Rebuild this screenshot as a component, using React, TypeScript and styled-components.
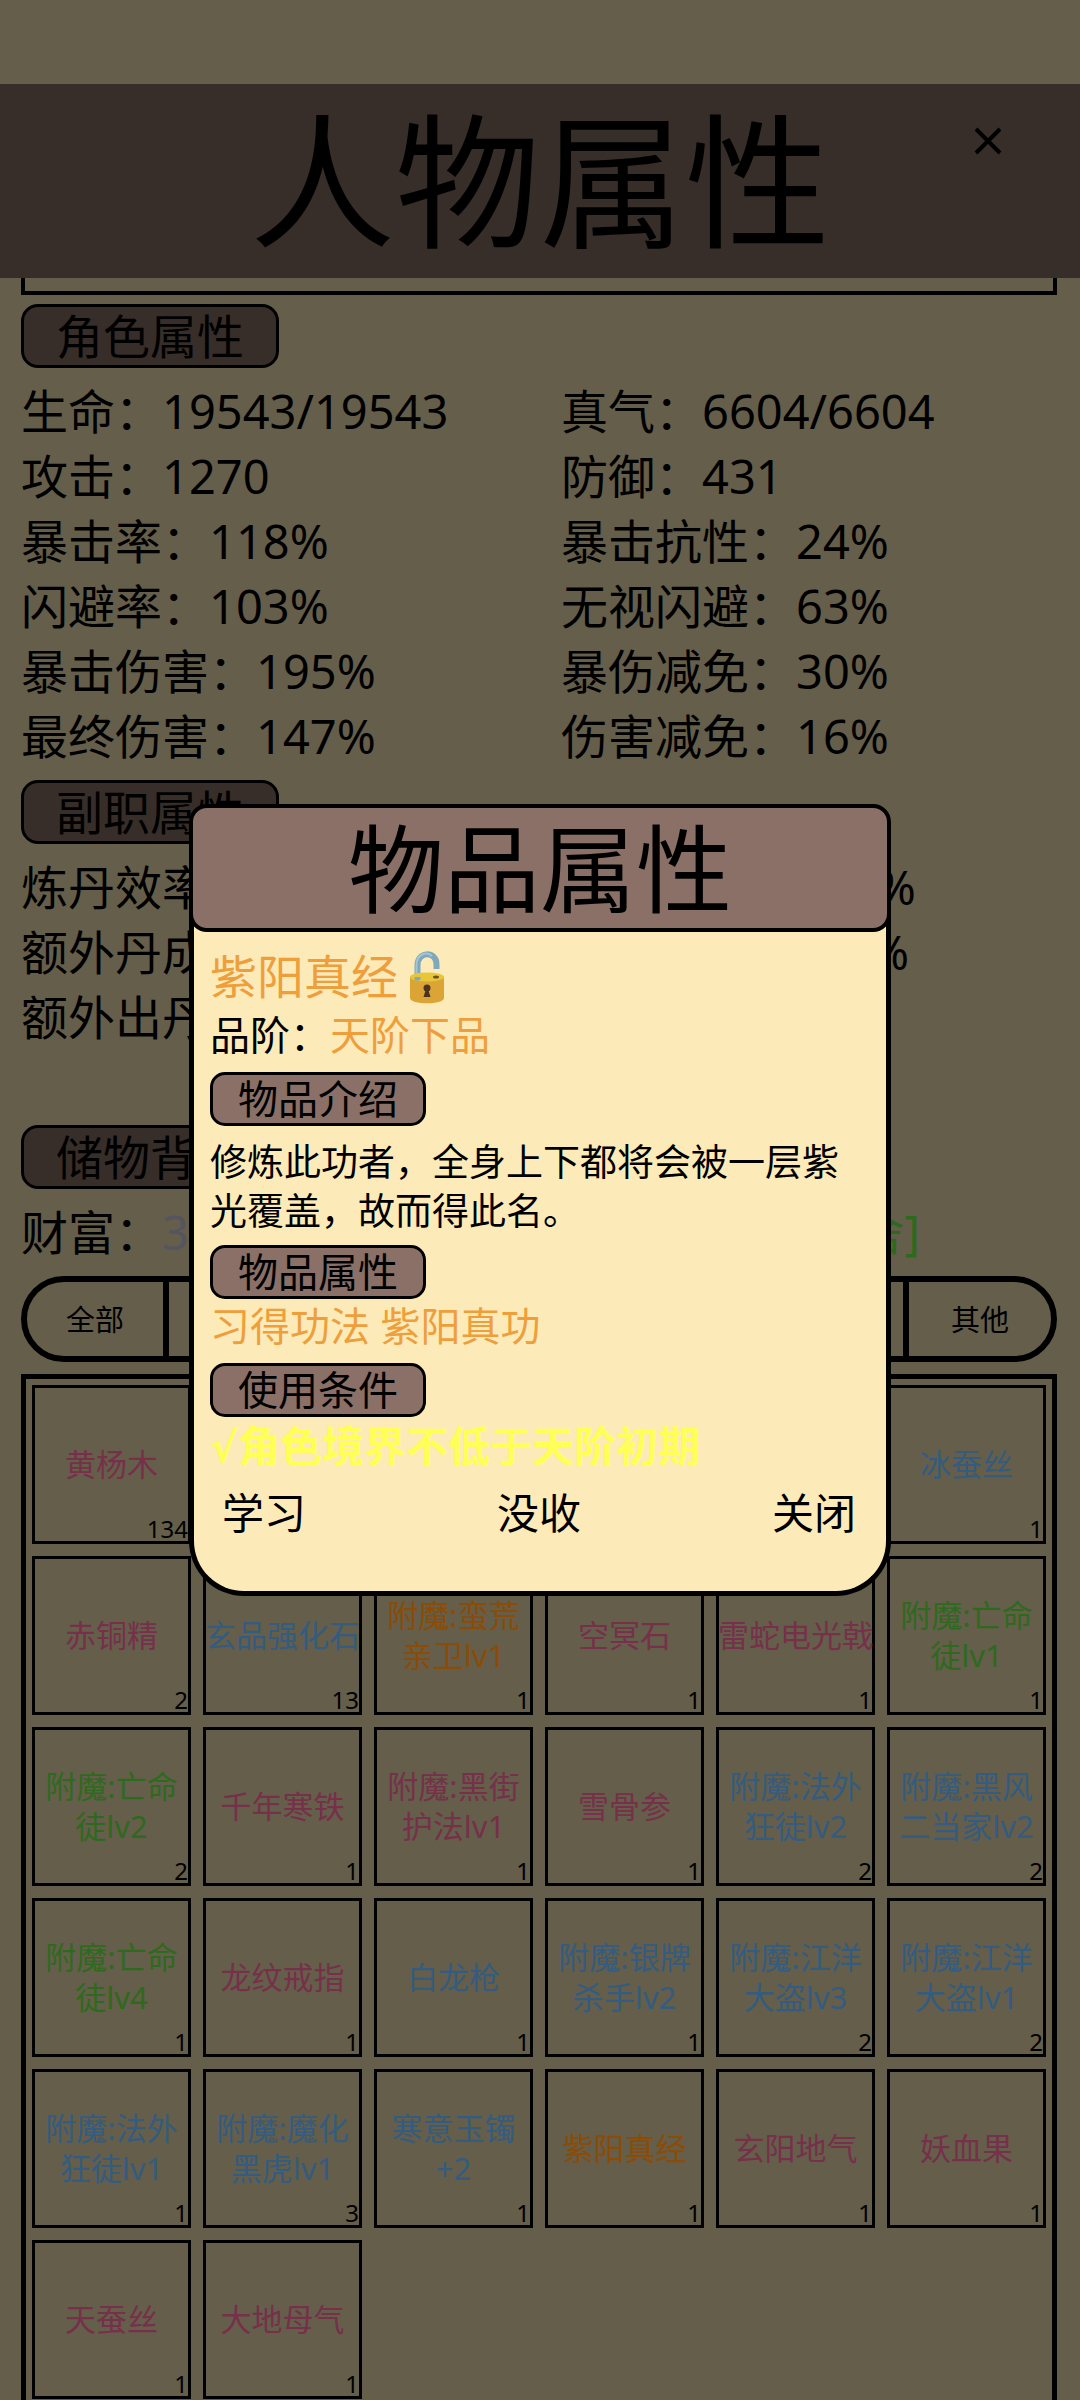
import React from "react";
import styled, { createGlobalStyle } from "styled-components";

const quality = {
  pink: "#76304a",
  blue: "#335c80",
  green: "#2e6a1e",
  orange: "#8a4c06",
};
type Quality = keyof typeof quality;

const dimmedPage = "#655e4a";
const dimmedBar = "#372d29";
const paper = "#fcebb9";
const bar = "#8a7066";
const gold = "#ee9f3c";

const GlobalStyle = createGlobalStyle`
  * { box-sizing: border-box; }
  body {
    margin: 0;
    background: ${dimmedPage};
    color: #000;
    font-family: "Noto Sans", "Noto Sans CJK SC", sans-serif;
    font-weight: 400;
  }
  h1, h2, h3, p, dl, dd, dt, ul { margin: 0; padding: 0; font-weight: 400; }
  ul { list-style: none; }
  button { font: inherit; color: inherit; background: none; border: 0; padding: 0; margin: 0; cursor: pointer; }
`;

const Screen = styled.div`
  display: flex;
  flex-direction: column;
  height: 100vh;
  overflow: hidden;
  padding-top: 84px;
`;

const TitleBar = styled.header`
  flex: none;
  display: grid;
  grid-template-columns: 184px 1fr 184px;
  height: 194px;
  background: ${dimmedBar};
`;

const PageTitle = styled.h1`
  grid-column: 2;
  text-align: center;
  white-space: nowrap;
  font-size: 145px;
  line-height: 194px;
`;

const CloseButton = styled.button`
  align-self: start;
  justify-self: center;
  width: 64px;
  height: 113px;
  display: grid;
  place-items: center;
`;

const Content = styled.main`
  flex: 1;
  min-height: 0;
  overflow: hidden;
`;

const PanelEnd = styled.div`
  height: 17px;
  margin: 0 23px 9px 21px;
  border: 4px solid #000;
  border-top: 0;
`;

const Tag = styled.h2`
  width: fit-content;
  margin-left: 21px;
  padding: 0 32px;
  border: 3px solid #000;
  border-radius: 17px;
  background: ${dimmedBar};
  font-size: 47px;
  line-height: 58px;
`;

const DialogTag = styled.h3`
  width: fit-content;
  padding: 0 25px;
  border: 3px solid #000;
  border-radius: 15px;
  background: ${bar};
  font-size: 40px;
  line-height: 48px;
`;

const Stats = styled.dl`
  display: grid;
  grid-template-columns: 1fr 1fr;
  padding: 11px 0;
  font-size: 47px;
  line-height: 65px;
`;

const Stat = styled.div`
  display: flex;
  padding-left: 21px;
  white-space: nowrap;
`;

const Section = styled.section<{ $gap?: number }>`
  padding-bottom: ${(p) => p.$gap || 0}px;
`;

const Wealth = styled.div`
  display: flex;
  justify-content: space-between;
  padding: 11px 160px 11px 21px;
  font-size: 47px;
  line-height: 65px;
`;

const Money = styled.span`
  color: #54555e;
`;

const Discard = styled.button`
  color: ${quality.green};
`;

const Tabs = styled.nav`
  display: grid;
  grid-template-columns: 142px repeat(5, minmax(0, 1fr)) 142px;
  height: 86px;
  margin: 0 23px 12px 21px;
  border: 6px solid #000;
  border-radius: 43px;
`;

const Tab = styled.button`
  padding-bottom: 3px;
  font-size: 29px;
  &:not(:last-child) { border-right: 6px solid #000; }
`;

const Bag = styled.ul`
  display: grid;
  grid-template-columns: repeat(6, minmax(0, 1fr));
  gap: 12px;
  margin: 0 23px 0 21px;
  padding: 6px;
  border: 5px solid #000;
`;

const Slot = styled.li`
  position: relative;
  aspect-ratio: 1;
  border: 3px solid #000;
`;

const ItemButton = styled.button<{ $quality: Quality }>`
  width: 100%;
  height: 100%;
  display: flex;
  align-items: center;
  justify-content: center;
  padding-bottom: 2px;
  text-align: center;
  white-space: pre;
  color: ${(p) => quality[p.$quality]};
  font-size: 31px;
  line-height: 40px;
`;

const Count = styled.span`
  position: absolute;
  right: 0;
  bottom: 0;
  font-size: 24px;
  line-height: 24px;
`;

const DialogLayer = styled.div`
  position: fixed;
  inset: 0;
  display: grid;
  place-items: center;
`;

const Dialog = styled.section`
  width: 65%;
`;

const DialogTitle = styled.h2`
  position: relative;
  border: 4px solid #000;
  border-radius: 18px;
  background: ${bar};
  text-align: center;
  font-size: 96px;
  line-height: 120px;
`;

const DialogBody = styled.div`
  margin-top: -20px;
  padding: 34px 16px 48px;
  border: 5px solid #000;
  border-top: 0;
  border-radius: 0 0 55px 55px;
  background: ${paper};
`;

const ItemName = styled.h3`
  display: flex;
  align-items: center;
  color: ${gold};
  font-size: 47px;
  line-height: 60px;
`;

const Line = styled.p`
  font-size: 40px;
  line-height: 54px;
  em { font-style: normal; color: ${gold}; }
`;

const Rank = styled(Line)`
  padding: 2px 0 10px;
`;

const Intro = styled.p`
  padding: 11px 0 10px;
  font-size: 37px;
  line-height: 49px;
`;

const Effect = styled(Line)`
  padding-bottom: 10px;
`;

const Requirement = styled.p`
  color: #ffff55;
  font-size: 42px;
  font-weight: 700;
  line-height: 58px;
`;

const Check = styled.span`
  font-family: "DejaVu Sans", sans-serif;
`;

const Actions = styled.div`
  display: flex;
  justify-content: space-between;
  padding: 6px 14px 0 12px;
  font-size: 42px;
  line-height: 60px;
`;

const Lock = styled.svg`
  width: 56px;
  height: 56px;
`;

function OpenLock() {
  return (
    <Lock viewBox="0 0 56 56" aria-hidden="true">
      <path d="M19.500 32V17C19.500 3 38.500 3 38.500 16V21" fill="none" stroke="#7fa9bb" strokeWidth="6" />
      <path d="M18.500 30V17C18.500 6 29 3 34 8" fill="none" stroke="#a4c6d2" strokeWidth="2" />
      <path d="M12 29V50C12 57 46 57 46 50V29Z" fill="#dba536" />
      <ellipse cx="29" cy="29" rx="17" ry="4.500" fill="#e8c638" />
      <path d="M16.500 29H22.500V31C22 33 17 33 16.500 31Z" fill="#7fa9bb" />
      <ellipse cx="38" cy="29" rx="3" ry="1.500" fill="#6b5320" />
      <circle cx="29" cy="40" r="3.500" fill="#4b3420" />
      <path d="M28 41L25.500 49H32.500L30 41Z" fill="#4b3420" />
    </Lock>
  );
}

const roleStats = [
  ["生命", "19543/19543"], ["真气", "6604/6604"],
  ["攻击", "1270"], ["防御", "431"],
  ["暴击率", "118%"], ["暴击抗性", "24%"],
  ["闪避率", "103%"], ["无视闪避", "63%"],
  ["暴击伤害", "195%"], ["暴伤减免", "30%"],
  ["最终伤害", "147%"], ["伤害减免", "16%"],
];

const craftStats = [
  ["炼丹效率", "100%"], ["炼器效率", "100%"],
  ["额外丹成率", "5%"], ["额外器成率", "5%"],
  ["额外出丹率", "5%"],
];

const tabs = ["全部", "装备", "丹药", "材料", "功法", "附魔", "其他"];

const items: [string, number, Quality][] = [
  ["黄杨木", 134, "pink"], ["灵石", 1, "blue"], ["灵草", 1, "blue"], ["丹炉", 1, "blue"], ["玄铁", 1, "blue"], ["冰蚕丝", 1, "blue"],
  ["赤铜精", 2, "pink"], ["玄品强化石", 13, "blue"], ["附魔:蛮荒\n亲卫lv1", 1, "orange"], ["空冥石", 1, "pink"], ["雷蛇电光戟", 1, "pink"], ["附魔:亡命\n徒lv1", 1, "green"],
  ["附魔:亡命\n徒lv2", 2, "green"], ["千年寒铁", 1, "pink"], ["附魔:黑街\n护法lv1", 1, "pink"], ["雪骨参", 1, "pink"], ["附魔:法外\n狂徒lv2", 2, "blue"], ["附魔:黑风\n二当家lv2", 2, "blue"],
  ["附魔:亡命\n徒lv4", 1, "green"], ["龙纹戒指", 1, "pink"], ["白龙枪", 1, "blue"], ["附魔:银牌\n杀手lv2", 1, "blue"], ["附魔:江洋\n大盗lv3", 2, "blue"], ["附魔:江洋\n大盗lv1", 2, "blue"],
  ["附魔:法外\n狂徒lv1", 1, "blue"], ["附魔:魔化\n黑虎lv1", 3, "blue"], ["寒意玉镯\n+2", 1, "blue"], ["紫阳真经", 1, "orange"], ["玄阳地气", 1, "pink"], ["妖血果", 1, "pink"],
  ["天蚕丝", 1, "pink"], ["大地母气", 1, "pink"],
];

function StatList({ rows }: { rows: string[][] }) {
  return (
    <Stats>
      {rows.map(([name, value]) => (
        <Stat key={name}>
          <dt>{name}：</dt>
          <dd>{value}</dd>
        </Stat>
      ))}
    </Stats>
  );
}

export default function App() {
  return (
    <>
      <GlobalStyle />
      <Screen>
        <TitleBar>
          <PageTitle>人物属性</PageTitle>
          <CloseButton aria-label="关闭">
            <svg width="28" height="28" viewBox="0 0 28 28" stroke="#000" strokeWidth="4">
              <path d="M2 2L26 26M26 2L2 26" />
            </svg>
          </CloseButton>
        </TitleBar>
        <Content>
          <PanelEnd />
          <Section>
            <Tag>角色属性</Tag>
            <StatList rows={roleStats} />
          </Section>
          <Section $gap={64}>
            <Tag>副职属性</Tag>
            <StatList rows={craftStats} />
          </Section>
          <Section>
            <Tag>储物背包</Tag>
            <Wealth>
              <span>财富：<Money>3</Money></span>
              <Discard>[一键取舍]</Discard>
            </Wealth>
            <Tabs>
              {tabs.map((t) => <Tab key={t}>{t}</Tab>)}
            </Tabs>
            <Bag>
              {items.map(([name, count, q]) => (
                <Slot key={name}>
                  <ItemButton $quality={q}>{name}</ItemButton>
                  <Count>{count}</Count>
                </Slot>
              ))}
            </Bag>
          </Section>
        </Content>
      </Screen>
      <DialogLayer>
        <Dialog role="dialog" aria-labelledby="item-title">
          <DialogTitle id="item-title">物品属性</DialogTitle>
          <DialogBody>
            <ItemName>紫阳真经<OpenLock /></ItemName>
            <Rank>品阶：<em>天阶下品</em></Rank>
            <DialogTag>物品介绍</DialogTag>
            <Intro>修炼此功者，全身上下都将会被一层紫光覆盖，故而得此名。</Intro>
            <DialogTag>物品属性</DialogTag>
            <Effect><em>习得功法 紫阳真功</em></Effect>
            <DialogTag>使用条件</DialogTag>
            <Requirement><Check>√</Check>角色境界不低于天阶初期</Requirement>
            <Actions>
              <button>学习</button>
              <button>没收</button>
              <button>关闭</button>
            </Actions>
          </DialogBody>
        </Dialog>
      </DialogLayer>
    </>
  );
}
